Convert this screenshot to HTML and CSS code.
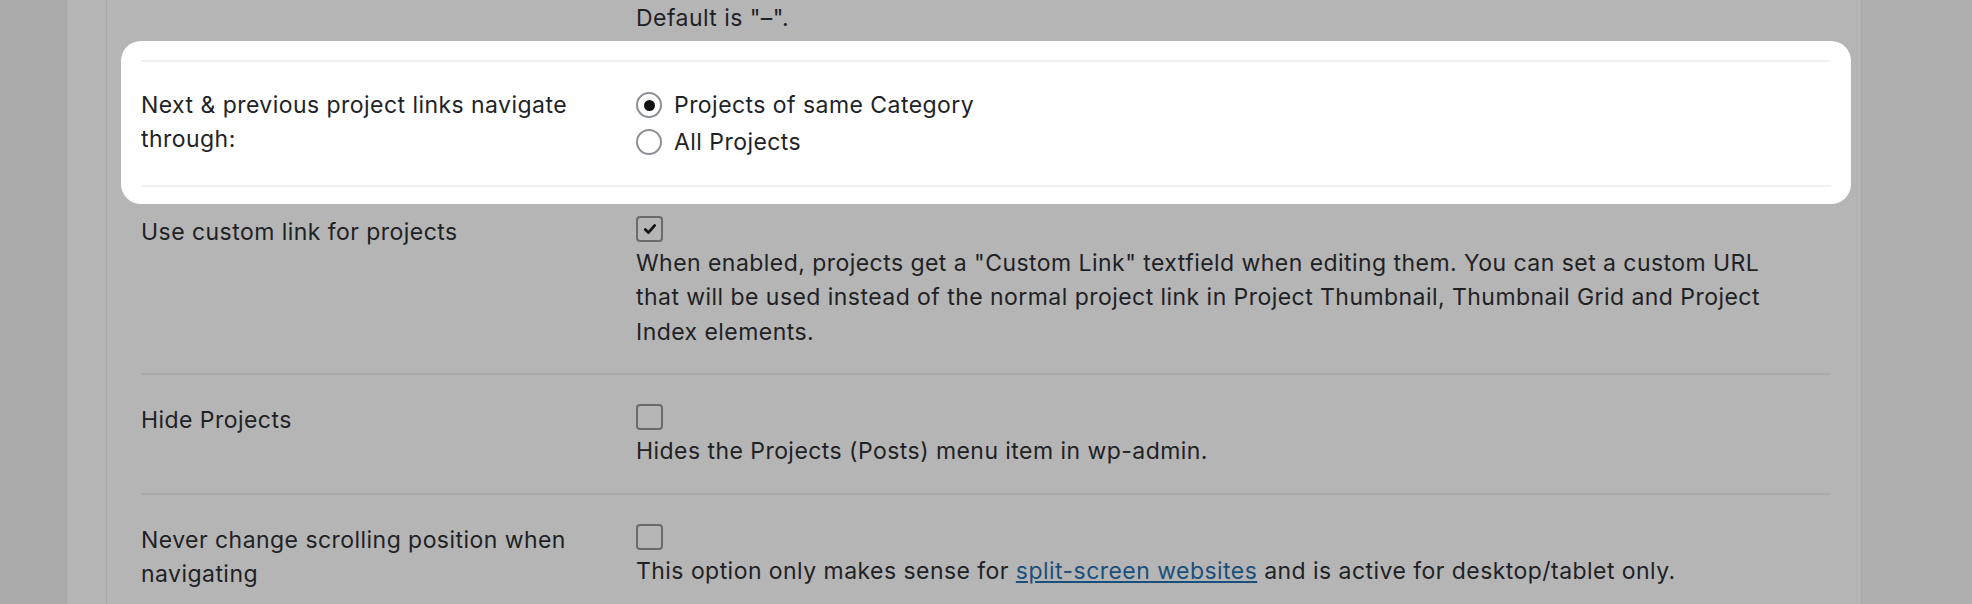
FILE: index.html
```html
<!DOCTYPE html>
<html lang="en">
<head>
  <meta charset="UTF-8">
  <title>Project Settings</title>
  <link rel="stylesheet" href="styles.css">
</head>
<body>
  <div class="screen">
    <aside class="sidebar"></aside>
    <div class="gutter"></div>

    <main class="panel">
      <div class="form-table">
        <div class="row row-cut">
          <div class="th"></div>
          <div class="td">
            <p class="description">Default is "&ndash;".</p>
          </div>
        </div>

        <!-- highlighted setting -->
        <div class="spotlight">
          <div class="row">
            <div class="th">Next &amp; previous project links navigate through:</div>
            <div class="td">
              <label class="choice"><span class="radio checked"></span>Projects of same Category</label>
              <label class="choice"><span class="radio"></span>All Projects</label>
            </div>
          </div>
        </div>

        <div class="row">
          <div class="th">Use custom link for projects</div>
          <div class="td">
            <span class="checkbox checked">
              <svg viewBox="0 0 16 16" width="18" height="18"><path d="M3.8 8.4 L6.6 11.2 L12.2 4.8" fill="none" stroke="#111" stroke-width="2.4" stroke-linecap="round" stroke-linejoin="round"/></svg>
            </span>
            <p class="description">When enabled, projects get a "Custom Link" textfield when editing them. You can set a custom URL that will be used instead of the normal project link in Project Thumbnail, Thumbnail Grid and Project Index elements.</p>
          </div>
        </div>

        <div class="row">
          <div class="th">Hide Projects</div>
          <div class="td">
            <span class="checkbox"></span>
            <p class="description">Hides the Projects (Posts) menu item in wp-admin.</p>
          </div>
        </div>

        <div class="row">
          <div class="th">Never change scrolling position when navigating</div>
          <div class="td">
            <span class="checkbox"></span>
            <p class="description">This option only makes sense for <a href="#">split-screen websites</a> and is active for desktop/tablet only.</p>
          </div>
        </div>
      </div>
    </main>

    <div class="side-right"></div>
  </div>
</body>
</html>
```

FILE: styles.css
```css
* {
  margin: 0;
  padding: 0;
  box-sizing: border-box;
}

body {
  font-family: Inter, "Noto Sans", sans-serif;
  font-size: 23px;
  letter-spacing: 0.45px;
  color: #1f2225;
  background-color: #b5b5b5;
  height: 604px;
  overflow: hidden;
}

.screen {
  display: flex;
  height: 604px;
}

.sidebar {
  width: 67px;
  background-color: #aaaaaa;
  border-right: 1px solid #a6a6a6;
}

.gutter {
  width: 40px;
  background-color: #b5b5b5;
  border-right: 1px solid #a9a9a9;
}

.panel {
  flex: 1;
  padding: 0 30px 0 34px;
  border-right: 1px solid #a8a8a8;
}

.side-right {
  width: 110px;
  background-color: #afafaf;
}

/* settings rows */
.row {
  display: grid;
  grid-template-columns: 495px 1fr;
  padding: 28px 0 24px;
  border-bottom: 2px solid #aaaaaa;
}

.th {
  line-height: 34.5px;
  padding-right: 50px;
}

.description {
  line-height: 34.5px;
  margin-top: 4px;
  max-width: 1150px;
}

.description a {
  color: #1a4f7b;
}

.row-cut {
  padding: 1px 0 24px;
  border-bottom: none;
}

.row-cut .description {
  margin-top: 0;
}

.spotlight {
  background-color: #fff;
  border-radius: 20px;
  margin: -19px -20px -17px;
  padding: 19px 20px 17px;
  color: #1d2327;
}

.spotlight .row {
  padding: 25px 0 24px;
  border-top: 2px solid #f0f0f0;
  border-bottom: 2px solid #f0f0f0;
}

.spotlight .th {
  margin-top: 1px;
}

.choice {
  display: flex;
  align-items: center;
  gap: 12px;
  height: 37px;
}

.radio {
  width: 26px;
  height: 26px;
  border: 2px solid #8c8f94;
  border-radius: 50%;
  display: flex;
  align-items: center;
  justify-content: center;
}

.radio.checked::after {
  content: "";
  width: 11px;
  height: 11px;
  border-radius: 50%;
  background-color: #111;
}

.checkbox {
  width: 27px;
  height: 26px;
  margin-top: 1px;
  border: 2px solid #6a6b6d;
  border-radius: 4px;
  display: flex;
  align-items: center;
  justify-content: center;
}
```
